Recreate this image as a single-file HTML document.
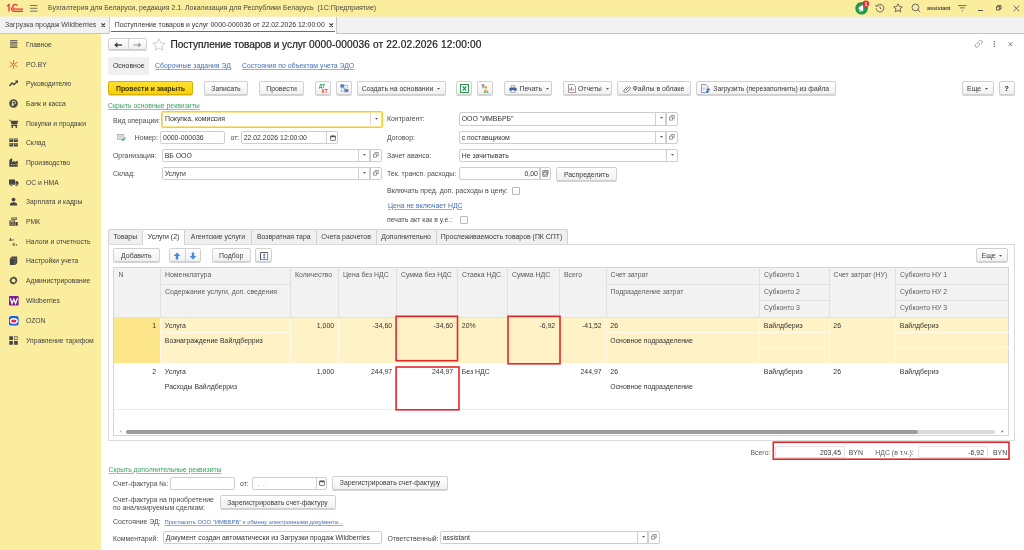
<!DOCTYPE html>
<html><head><meta charset="utf-8">
<style>
*{box-sizing:border-box;margin:0;padding:0}
html,body{width:1024px;height:550px;overflow:hidden;background:#fff}
body{will-change:transform;font-family:"Liberation Sans",sans-serif;font-size:6.9px;color:#3a3a3a;position:relative}
.a{position:absolute;white-space:nowrap}
.t{position:absolute;white-space:nowrap;line-height:10px;height:10px}
#titlebar{left:0;top:0;width:1024px;height:16px;background:#fbed9e}
#tabbar{left:0;top:16px;width:1024px;height:18px;background:#f2f2f2;border-bottom:1px solid #c4c4c4}
#sidebar{left:0;top:34px;width:101px;height:516px;background:#fbed9e}
#sideedge{left:101px;top:34px;width:0.5px;height:516px;background:#fbed9e}
.inp{position:absolute;height:13px;border:1px solid #cecece;border-radius:2px;background:#fff;line-height:11px;padding-left:1.7px;color:#333;white-space:nowrap;overflow:hidden}
.btn{position:absolute;height:14px;border:1px solid #d0d0d0;border-radius:2px;background:linear-gradient(#ffffff,#f0f0f0);line-height:13px;text-align:center;color:#3a3a3a;white-space:nowrap;box-shadow:0 1px 0.6px rgba(0,0,0,.17)}
.lnk{color:#4370b4;text-decoration:underline;text-decoration-thickness:0.6px;text-underline-offset:0.8px;text-decoration-color:rgba(67,112,180,.55)}
.glnk{color:#35a35f;text-decoration:underline;text-decoration-thickness:0.6px;text-underline-offset:0.8px;text-decoration-color:rgba(53,163,95,.6)}
.sep{position:absolute;top:0;bottom:0;width:1px;background:#d2d2d2}
.sb{position:absolute;left:26px;line-height:10px;color:#3f3f3f;font-size:6.75px}
.lb{position:absolute;white-space:nowrap;line-height:10px;color:#4a4a4a}
.dd{position:absolute;font-size:5px;color:#555;line-height:10px}
.c{position:absolute;white-space:nowrap;line-height:10px;color:#333}
.h{position:absolute;white-space:nowrap;line-height:10px;color:#5a5a5a}
</style></head><body>
<div class="a" id="titlebar"></div>
<div class="a" id="tabbar"></div>
<div class="a" style="left:0;top:16px;width:1024px;height:1px;background:#f6efc6"></div>
<div class="a" id="sidebar"></div>

<!-- TITLEBAR -->
<svg class="a" style="left:6px;top:3px" width="18" height="10" viewBox="0 0 18 10"><g fill="none" stroke="#e5333a" stroke-width="1.3"><path d="M1 3.2L3 1.6V8.6"/><path d="M17 6.2H9.2a2.4 2.4 0 0 1 0-4.8c1 0 1.8 0.5 2.2 1.2"/><path d="M17 8.4H9a4 4 0 0 1-3.6-4"/></g></svg>
<svg class="a" style="left:30px;top:5px" width="8" height="7" viewBox="0 0 8 7"><path d="M0 0.5h7.5M0 3.3h7.5M0 6.1h7.5" stroke="#555" stroke-width="0.8"/></svg>
<div class="t" style="left:48px;top:3px;color:#4a4a3a;font-size:7px">Бухгалтерия для Беларуси, редакция 2.1. Локализация для Республики Беларусь&nbsp; (1С:Предприятие)</div>
<svg class="a" style="left:854px;top:0px" width="18" height="16" viewBox="0 0 18 16"><circle cx="7.6" cy="8.2" r="6.3" fill="#1e9a4a"/><path d="M4.6 7.6l4.6-3v7l-4.6-2.4z M5.2 10.2l0.8 1.8h1.3l-0.6-1.6z" fill="#fff"/><circle cx="11.8" cy="3.8" r="3.3" fill="#e8262d"/><text x="10.6" y="5.7" font-size="5.2" font-weight="bold" font-family="Liberation Sans" fill="#fff">1</text></svg>
<svg class="a" style="left:875px;top:3px" width="10" height="10" viewBox="0 0 10 10"><g stroke="#555" stroke-width="0.85" fill="none"><path d="M1.6 3.2A3.9 3.9 0 1 1 1.1 5.4"/><path d="M5 2.8V5.2l1.6 1"/><path d="M0.4 1.8l1.1 1.7 1.8-0.8"/></g></svg>
<svg class="a" style="left:893px;top:3px" width="10" height="10" viewBox="0 0 10 10"><path d="M5 0.8l1.3 2.8 3 0.3-2.3 2 0.7 3L5 7.4 2.3 8.9l0.7-3-2.3-2 3-0.3z" stroke="#555" stroke-width="0.85" fill="none"/></svg>
<svg class="a" style="left:911px;top:3px" width="10" height="10" viewBox="0 0 10 10"><circle cx="4.4" cy="4.4" r="3.4" stroke="#555" stroke-width="0.85" fill="none"/><path d="M6.8 6.8l2.4 2.2" stroke="#555" stroke-width="0.9"/></svg>
<div class="t" style="left:927px;top:3px;font-size:5.6px;color:#444;font-weight:bold;letter-spacing:-0.1px">assistant</div>
<svg class="a" style="left:958px;top:4px" width="9" height="8" viewBox="0 0 9 8"><path d="M0 1.6h8.6M1.8 3.9h5" stroke="#555" stroke-width="0.85"/><path d="M3.3 6.4h2L4.3 7.6z" fill="#555"/></svg>
<div class="a" style="left:978px;top:10px;width:5px;height:1px;background:#555"></div>
<svg class="a" style="left:996px;top:5.4px" width="5.6" height="5.6" viewBox="0 0 7 7"><path d="M0.6 2.2h4v4h-4zM2 2V0.7h4.2v4.2H4.8" stroke="#444" stroke-width="1.1" fill="none"/></svg>
<svg class="a" style="left:1013px;top:5px" width="7" height="7" viewBox="0 0 7 7"><path d="M0.6 0.6l5.6 5.6M6.2 0.6L0.6 6.2" stroke="#555" stroke-width="0.85"/></svg>
<!-- TABS -->
<div class="t" style="left:5px;top:20px;color:#444;font-size:7px">Загрузка продаж Wildberries</div>
<svg class="a" style="left:100.5px;top:22.8px" width="4.4" height="4.4" viewBox="0 0 5 5"><path d="M0.5 0.5l4 4M4.5 0.5l-4 4" stroke="#333" stroke-width="1.3"/></svg>
<div class="a" style="left:109px;top:16.5px;width:228px;height:17.5px;background:#fff;border-left:1px solid #c9c9c9;border-right:1px solid #c9c9c9"></div>
<div class="a" style="left:111px;top:31px;width:224px;height:1px;background:#1c9a46"></div>
<div class="t" style="left:114.8px;top:20px;color:#333;font-size:6.88px">Поступление товаров и услуг 0000-000036 от 22.02.2026 12:00:00</div>
<svg class="a" style="left:328.5px;top:22.8px" width="4.4" height="4.4" viewBox="0 0 5 5"><path d="M0.5 0.5l4 4M4.5 0.5l-4 4" stroke="#333" stroke-width="1.3"/></svg>
<!-- SIDEBAR -->
<svg class="a" style="left:9px;top:39.5px" width="10" height="10" viewBox="0 0 10 10"><path d="M1 0.8h7.4M1 2.9h7.4M1 5h7.4M1 7.1h7.4" stroke="#454545" stroke-width="1.1" fill="none"/></svg>
<div class="sb" style="top:39.8px">Главное</div>
<svg class="a" style="left:9px;top:59.5px" width="10" height="10" viewBox="0 0 10 10"><g stroke="#e05a4a" stroke-width="0.8" fill="none"><path d="M4.5 0v9M0.5 2l8 5M0.5 7l8-5"/><circle cx="4.5" cy="4.5" r="1.2" fill="#fbed9e"/></g></svg>
<div class="sb" style="top:59.8px">PO.BY</div>
<svg class="a" style="left:9px;top:79.0px" width="10" height="10" viewBox="0 0 10 10"><path d="M0.5 7L3 4l2 1.5L8.5 2" stroke="#454545" stroke-width="1.4" fill="none"/><path d="M6 1.5h3v3z" fill="#454545"/></svg>
<div class="sb" style="top:79.3px">Руководителю</div>
<svg class="a" style="left:9px;top:98.5px" width="10" height="10" viewBox="0 0 10 10"><circle cx="4.5" cy="4.5" r="4.3" fill="#454545"/><path d="M3.3 7V2.2h1.8a1.4 1.4 0 0 1 0 2.8H3.3M2.5 6h2.6" stroke="#fbed9e" stroke-width="0.9" fill="none"/></svg>
<div class="sb" style="top:98.8px">Банк и касса</div>
<svg class="a" style="left:9px;top:118.5px" width="10" height="10" viewBox="0 0 10 10"><path d="M0 0.8h1.6l0.5 1h7.2l-1.2 3.6H2.6L1.4 1.6H0z M2.3 6h6v0.9h-6z" fill="#454545"/><circle cx="3.2" cy="8" r="0.9" fill="#454545"/><circle cx="7.3" cy="8" r="0.9" fill="#454545"/></svg>
<div class="sb" style="top:118.8px">Покупки и продажи</div>
<svg class="a" style="left:9px;top:138.0px" width="10" height="10" viewBox="0 0 10 10"><path d="M0.3 0.5h3.9v3.6H0.3zM4.9 0.5h3.9v3.6H4.9zM0.3 4.9h3.9v3.6H0.3zM4.9 4.9h3.9v3.6H4.9z" fill="#454545"/><path d="M1.2 1.6h2M5.8 1.6h2M1.2 6h2M5.8 6h2" stroke="#fbed9e" stroke-width="0.7"/></svg>
<div class="sb" style="top:138.3px">Склад</div>
<svg class="a" style="left:9px;top:157.5px" width="10" height="10" viewBox="0 0 10 10"><path d="M0.3 8.7V2.2L2 0.6h1.2v3.6L5.7 2.6v1.6L8.7 2.6v6.1z" fill="#454545"/><path d="M2 6.5h1.2M4.4 6.5h1.2M6.6 6.5h1.2" stroke="#fbed9e" stroke-width="0.8"/></svg>
<div class="sb" style="top:157.8px">Производство</div>
<svg class="a" style="left:9px;top:177.5px" width="10" height="10" viewBox="0 0 10 10"><path d="M0 1.5h6v5.2H0zM6.5 3h1.6l1.4 1.6v2.1H6.5z" fill="#454545"/><circle cx="2.2" cy="7.2" r="1.1" fill="#454545" stroke="#fbed9e" stroke-width="0.4"/><circle cx="7.4" cy="7.2" r="1.1" fill="#454545" stroke="#fbed9e" stroke-width="0.4"/></svg>
<div class="sb" style="top:177.8px">ОС и НМА</div>
<svg class="a" style="left:9px;top:197.0px" width="10" height="10" viewBox="0 0 10 10"><circle cx="4.5" cy="2.6" r="1.9" fill="#454545"/><path d="M0.9 8.6V7.4C0.9 6 2.5 5.2 4.5 5.2s3.6 0.8 3.6 2.2v1.2z" fill="#454545"/></svg>
<div class="sb" style="top:197.3px">Зарплата и кадры</div>
<svg class="a" style="left:9px;top:216.5px" width="10" height="10" viewBox="0 0 10 10"><path d="M0.4 3.4h5.6v5.3H0.4zM6.4 5h2.3v3.7H6.4zM2.4 0.4h5.4v2.4H2.4z" fill="#454545"/><path d="M1.4 4.6h3.6M3.2 1.4h3.6" stroke="#fbed9e" stroke-width="0.7"/><path d="M1.3 6h1M2.8 6h1M4.3 6h1M1.3 7.4h1M2.8 7.4h1M4.3 7.4h1" stroke="#fbed9e" stroke-width="0.6"/></svg>
<div class="sb" style="top:216.8px">РМК</div>
<svg class="a" style="left:9px;top:236.5px" width="10" height="10" viewBox="0 0 10 10"><text x="0" y="3.8" font-size="4.2" font-family="Liberation Sans" font-weight="bold" fill="#454545">Ат</text><text x="3.6" y="8.6" font-size="4.2" font-family="Liberation Sans" font-weight="bold" fill="#454545">Кт</text></svg>
<div class="sb" style="top:236.8px">Налоги и отчетность</div>
<svg class="a" style="left:9px;top:256.0px" width="10" height="10" viewBox="0 0 10 10"><path d="M0.8 2.6L3 0.6h5.2v6.3L6 8.9H0.8z" fill="#454545"/><path d="M6 2.6H0.8M6 2.6v6.3M6 2.6L8.2 0.6" stroke="#8a8a7a" stroke-width="0.5" fill="none"/></svg>
<div class="sb" style="top:256.3px">Настройки учета</div>
<svg class="a" style="left:9px;top:275.5px" width="10" height="10" viewBox="0 0 10 10"><path d="M4.5 0l0.7 1.2 1.3-0.5 0.2 1.4 1.4 0.2-0.5 1.3 1.2 0.7-1.2 0.7 0.5 1.3-1.4 0.2-0.2 1.4-1.3-0.5L4.5 9l-0.7-1.2-1.3 0.5-0.2-1.4-1.4-0.2 0.5-1.3L0.2 4.5l1.2-0.7-0.5-1.3 1.4-0.2 0.2-1.4 1.3 0.5z" fill="#454545"/><circle cx="4.5" cy="4.5" r="2" fill="#fbed9e"/></svg>
<div class="sb" style="top:275.8px">Администрирование</div>
<svg class="a" style="left:9px;top:295.5px" width="10" height="10" viewBox="0 0 10 10"><rect x="0" y="0" width="9.6" height="9.6" rx="0.8" fill="#7d1c98"/><path d="M1.2 2.2L3 7.4 4.8 3.2 6.6 7.4 8.4 2.2" stroke="#fff" stroke-width="1.3" fill="none" stroke-linejoin="miter"/></svg>
<div class="sb" style="top:295.8px">Wildberries</div>
<svg class="a" style="left:9px;top:315.5px" width="10" height="10" viewBox="0 0 10 10"><rect x="0" y="0" width="9.6" height="9.6" rx="2.2" fill="#1a5fe0"/><ellipse cx="4.8" cy="4.9" rx="4" ry="2.9" fill="#fff"/><ellipse cx="4.8" cy="5" rx="2.7" ry="1.6" fill="#e8214a"/></svg>
<div class="sb" style="top:315.8px">OZON</div>
<svg class="a" style="left:9px;top:335.5px" width="10" height="10" viewBox="0 0 10 10"><path d="M0.3 0.3h3.6v3.6H0.3zM0.3 5.1h3.6v3.6H0.3zM5.1 5.1h3.6v3.6H5.1z" fill="#454545"/><path d="M5.4 0.6h3v3h-3z" fill="none" stroke="#454545" stroke-width="0.7"/></svg>
<div class="sb" style="top:335.8px">Управление тарифом</div>
<!-- HEADER -->
<div class="btn" style="left:108px;top:38px;width:39px;height:12px;border-radius:2px"><div class="sep" style="left:19px"></div></div>
<svg class="a" style="left:114px;top:42px" width="9" height="6" viewBox="0 0 9 6"><path d="M2 3h6" stroke="#333" stroke-width="1.3" fill="none"/><path d="M3.4 0.2L0.2 3l3.2 2.8z" fill="#333"/></svg>
<svg class="a" style="left:133px;top:42px" width="9" height="6" viewBox="0 0 9 6"><path d="M0.6 3h6" stroke="#9a9a9a" stroke-width="1.1" fill="none"/><path d="M5.4 0.4L8.4 3 5.4 5.6z" fill="#9a9a9a"/></svg>
<svg class="a" style="left:152px;top:38px" width="14" height="13" viewBox="0 0 14 13"><path d="M7 0.8l1.8 4 4.2 0.4-3.2 2.8 1 4.2L7 10 3.2 12.2l1-4.2L1 5.2l4.2-0.4z" stroke="#c4c4c4" stroke-width="0.8" fill="none"/></svg>
<div class="a" style="left:170.6px;top:38px;font-size:10.15px;line-height:13px;color:#1e1e1e;-webkit-text-stroke:0.22px #1e1e1e"><span style="letter-spacing:-0.09px">Поступление товаров и услуг </span><span style="letter-spacing:0.12px">0000-000036 от 22.02.2026 12:00:00</span></div>
<svg class="a" style="left:974px;top:39px" width="10" height="10" viewBox="0 0 10 10"><g stroke="#8a8a8a" stroke-width="0.8" fill="none"><path d="M4 5.4a1.7 1.7 0 0 1 0.1-2.2l1.4-1.4a1.7 1.7 0 0 1 2.4 2.4L7 5.1"/><path d="M5.4 4.2a1.7 1.7 0 0 1-0.1 2.2L3.9 7.8a1.7 1.7 0 0 1-2.4-2.4L2.4 4.5"/></g></svg>
<svg class="a" style="left:993px;top:40px" width="3" height="8" viewBox="0 0 3 8"><circle cx="1.3" cy="1.7" r="0.75" fill="#666"/><circle cx="1.3" cy="4" r="0.75" fill="#666"/><circle cx="1.3" cy="6.3" r="0.75" fill="#666"/></svg>
<svg class="a" style="left:1008px;top:42px" width="5" height="5" viewBox="0 0 5 5"><path d="M0.5 0.3l3.8 3.8M4.3 0.3L0.5 4.1" stroke="#707070" stroke-width="0.9"/></svg>
<div class="a" style="left:108px;top:57px;width:41px;height:18px;background:#f0f0f0;border-radius:1px"></div>
<div class="t" style="left:113px;top:61px;color:#333">Основное</div>
<div class="t lnk" style="left:155px;top:61px">Сборочные задания ЭД</div>
<div class="t lnk" style="left:242px;top:61px">Состояния по объектам учета ЭДО</div>
<!-- TOOLBAR -->
<div class="btn" style="left:108px;top:81px;width:85px;background:linear-gradient(#ffe12e,#f9cf05);border-color:#d4b000;font-weight:bold;color:#3a3200">Провести и закрыть</div>
<div class="btn" style="left:204px;top:81px;width:44px;">Записать</div>
<div class="btn" style="left:259px;top:81px;width:45px;">Провести</div>
<div class="btn" style="left:315px;top:81px;width:16px;"><svg class="a" style="left:3px;top:2px" width="9" height="9" viewBox="0 0 9 9"><text x="0" y="4.2" font-size="4.6" font-weight="bold" font-family="Liberation Sans" fill="#2e9a55">ДТ</text><text x="2.8" y="8.6" font-size="4.6" font-weight="bold" font-family="Liberation Sans" fill="#e8353b">КТ</text></svg></div>
<div class="btn" style="left:335.5px;top:81px;width:16px;"><svg class="a" style="left:3px;top:2px" width="9" height="9" viewBox="0 0 9 9"><g fill="none" stroke="#5c86c4" stroke-width="0.8"><rect x="0.8" y="0.8" width="3.2" height="2.4" fill="#4a78bd"/><rect x="4.8" y="5.4" width="3.2" height="2.4" fill="#4a78bd"/><path d="M5.2 1.4h2.4v2.8M3.8 7.2H1.4V4.4" stroke="#86a8da"/><path d="M3 4.4h3" stroke="#86a8da"/></g></svg></div>
<div class="btn" style="left:356.5px;top:81px;width:89px;">Создать на основании&nbsp; <svg width="3" height="1.9" viewBox="0 0 3.6 2.2" style="position:relative;top:-1.3px"><path d="M0 0h3.6L1.8 2.2z" fill="#555"/></svg></div>
<div class="btn" style="left:456px;top:81px;width:16px;"><svg class="a" style="left:3px;top:2px" width="9" height="9" viewBox="0 0 9 9"><rect x="0.5" y="0.5" width="8" height="8" fill="#fff" stroke="#1f8a44" stroke-width="0.9"/><path d="M2.6 2.4l3.8 4.2M6.4 2.4L2.6 6.6" stroke="#1f8a44" stroke-width="1.1"/></svg></div>
<div class="btn" style="left:477px;top:81px;width:16px;"><svg class="a" style="left:3px;top:2px" width="9" height="10" viewBox="0 0 9 10"><path d="M0.6 1h3M2.1 1v3.4" stroke="#444" stroke-width="0.8" fill="none"/><circle cx="4.8" cy="3.2" r="1.3" fill="#e0a040"/><path d="M2.8 6.8c0-1.6 4-1.6 4 0z" fill="#e0a040"/><path d="M3.4 9V7.2M4.6 9V7.2M3.4 9l1.2-1.8M5.6 9l0.9-1.8 0.9 1.8M5.9 8.4h1.2" stroke="#2e9a55" stroke-width="0.6" fill="none"/></svg></div>
<div class="btn" style="left:504px;top:81px;width:48px;"><svg class="a" style="left:3.6px;top:2.6px" width="8" height="8.4" viewBox="0 0 9 9"><path d="M2.4 0.6h4.2v2.2H2.4z" fill="#fff" stroke="#6a7a9a" stroke-width="0.7"/><rect x="0.5" y="2.8" width="8" height="3.8" rx="0.9" fill="#3f5f9a"/><path d="M2.4 5.4h4.2v3H2.4z" fill="#fff" stroke="#6a7a9a" stroke-width="0.7"/></svg><span style="padding-left:12.5px">Печать &nbsp;<svg width="3" height="1.9" viewBox="0 0 3.6 2.2" style="position:relative;top:-1.3px"><path d="M0 0h3.6L1.8 2.2z" fill="#555"/></svg></span></div>
<div class="btn" style="left:563px;top:81px;width:48.5px;"><svg class="a" style="left:4px;top:2px" width="8" height="9" viewBox="0 0 8 9"><path d="M0.5 0.5h5l2 2v6h-7z" fill="#fff" stroke="#777" stroke-width="0.7"/><path d="M2 6.5V4.4M3.6 6.5V3M5.2 6.5V5" stroke="#d0443a" stroke-width="0.9"/></svg><span style="padding-left:12px">Отчеты &nbsp;<svg width="3" height="1.9" viewBox="0 0 3.6 2.2" style="position:relative;top:-1.3px"><path d="M0 0h3.6L1.8 2.2z" fill="#555"/></svg></span></div>
<div class="btn" style="left:616.9px;top:81px;width:74.6px;"><svg class="a" style="left:5px;top:3px" width="8" height="8" viewBox="0 0 8 8"><path d="M2.6 5.4l3-3a1.1 1.1 0 0 1 1.6 1.6L3.6 7.2a1.7 1.7 0 0 1-2.4-2.4L4.4 1.6" stroke="#666" stroke-width="0.8" fill="none"/></svg><span style="padding-left:8.5px">Файлы в облаке</span></div>
<div class="btn" style="left:696px;top:81px;width:139.5px;"><svg class="a" style="left:4px;top:2px" width="10" height="9" viewBox="0 0 10 9"><path d="M0.5 0.5h4.4l1.8 1.8v6.2H0.5z" fill="#fff" stroke="#5577aa" stroke-width="0.7"/><path d="M1.6 3h3M1.6 4.6h3M1.6 6.2h2" stroke="#7a9acc" stroke-width="0.6"/><path d="M5 5.6h3.6M7.2 4.2l1.6 1.4-1.6 1.4" stroke="#3b66ad" stroke-width="0.9" fill="none"/><circle cx="6.4" cy="7.6" r="1.2" fill="#3b66ad"/></svg><span style="padding-left:11px;font-size:6.78px">Загрузить (перезаполнить) из файла</span></div>
<div class="btn" style="left:961.5px;top:81px;width:32px;">Еще &nbsp;<svg width="3" height="1.9" viewBox="0 0 3.6 2.2" style="position:relative;top:-1.3px"><path d="M0 0h3.6L1.8 2.2z" fill="#555"/></svg></div>
<div class="btn" style="left:998.5px;top:81px;width:16px;"><b style="font-size:7.5px;color:#222">?</b></div>
<!-- FORM -->
<div class="t glnk" style="left:108px;top:101px">Скрыть основные реквизиты</div>
<div class="lb" style="left:113px;top:115.6px">Вид операции:</div>
<div class="inp" style="left:161px;top:111px;width:222px;height:16.6px;line-height:14.8px;border:1px solid #f5cc20;box-shadow:inset 0 0 0 0.6px #f5cc20;border-radius:1.5px;padding-left:3px">Покупка, комиссия</div>
<div class="a" style="left:370px;top:113px;width:1px;height:12px;background:#d8d8d8"></div>
<svg class="a" style="left:375px;top:118px" width="3" height="1.9" viewBox="0 0 3.6 2.2"><path d="M0 0h3.6L1.8 2.2z" fill="#555"/></svg>
<svg class="a" style="left:117px;top:134.3px" width="9.2" height="7.5" viewBox="0 0 11 9"><rect x="0.6" y="0.6" width="7.6" height="6" fill="#e8e8e8" stroke="#9a9a9a" stroke-width="0.7"/><path d="M1.8 2.4h5M1.8 4h5" stroke="#aaa" stroke-width="0.6"/><path d="M5.6 6l1.6 1.8 3-3.6" stroke="#2e9a55" stroke-width="1.3" fill="none"/></svg>
<div class="lb" style="left:134.7px;top:132.5px">Номер:</div>
<div class="inp" style="left:160.4px;top:131px;width:64.6px;height:13px;line-height:11px;">0000-000036</div>
<div class="lb" style="left:230.5px;top:132.5px">от:</div>
<div class="inp" style="left:241px;top:131px;width:97px;height:13px;line-height:11px;">22.02.2026 12:00:00</div>
<div class="a" style="left:326px;top:132px;width:1px;height:11px;background:#d0d0d0"></div>
<svg class="a" style="left:329.5px;top:134.5px" width="6" height="6" viewBox="0 0 6 6"><rect x="0.5" y="0.8" width="5" height="4.6" rx="0.6" fill="none" stroke="#555" stroke-width="0.8"/><path d="M0.5 1.6h5" stroke="#555" stroke-width="1.3"/></svg>
<div class="lb" style="left:113px;top:150.5px">Организация:</div>
<div class="inp" style="left:162px;top:149px;width:208px;height:13px;line-height:11px;border-radius:2px 0 0 2px;">ВБ ООО</div>
<div class="a" style="left:358px;top:150px;width:1px;height:11px;background:#d0d0d0"></div>
<svg class="a" style="left:362.6px;top:154px" width="3" height="1.9" viewBox="0 0 3.6 2.2"><path d="M0 0h3.6L1.8 2.2z" fill="#555"/></svg>
<div class="a" style="left:369px;top:149px;width:13px;height:13px;border:1px solid #cecece;border-radius:0 2px 2px 0;background:#fff"></div>
<div class="a" style="left:370px;top:149px;width:1px;height:13px;background:#cecece"></div>
<svg class="a" style="left:373px;top:152.3px" width="5.8" height="5.6" viewBox="0 0 6 6"><path d="M2.2 1.6V0.5h3.3v3.3H4.4M0.5 2.2h3.3v3.3H0.5z" stroke="#707070" stroke-width="0.8" fill="none"/></svg>
<div class="lb" style="left:113px;top:168.5px">Склад:</div>
<div class="inp" style="left:162px;top:167px;width:208px;height:13px;line-height:11px;border-radius:2px 0 0 2px;">Услуги</div>
<div class="a" style="left:358px;top:168px;width:1px;height:11px;background:#d0d0d0"></div>
<svg class="a" style="left:362.6px;top:172px" width="3" height="1.9" viewBox="0 0 3.6 2.2"><path d="M0 0h3.6L1.8 2.2z" fill="#555"/></svg>
<div class="a" style="left:369px;top:167px;width:13px;height:13px;border:1px solid #cecece;border-radius:0 2px 2px 0;background:#fff"></div>
<div class="a" style="left:370px;top:167px;width:1px;height:13px;background:#cecece"></div>
<svg class="a" style="left:373px;top:170.3px" width="5.8" height="5.6" viewBox="0 0 6 6"><path d="M2.2 1.6V0.5h3.3v3.3H4.4M0.5 2.2h3.3v3.3H0.5z" stroke="#707070" stroke-width="0.8" fill="none"/></svg>
<div class="lb" style="left:387px;top:114px">Контрагент:</div>
<div class="inp" style="left:459px;top:112px;width:207px;height:14px;line-height:12px;border-radius:2px 0 0 2px;">ООО "ИМВБРБ"</div>
<div class="a" style="left:655px;top:113px;width:1px;height:12px;background:#d0d0d0"></div>
<svg class="a" style="left:659.6px;top:117px" width="3" height="1.9" viewBox="0 0 3.6 2.2"><path d="M0 0h3.6L1.8 2.2z" fill="#555"/></svg>
<div class="a" style="left:665px;top:112px;width:13px;height:14px;border:1px solid #cecece;border-radius:0 2px 2px 0;background:#fff"></div>
<div class="a" style="left:666px;top:112px;width:1px;height:14px;background:#cecece"></div>
<svg class="a" style="left:669px;top:115.3px" width="5.8" height="5.6" viewBox="0 0 6 6"><path d="M2.2 1.6V0.5h3.3v3.3H4.4M0.5 2.2h3.3v3.3H0.5z" stroke="#707070" stroke-width="0.8" fill="none"/></svg>
<div class="lb" style="left:387px;top:132.5px">Договор:</div>
<div class="inp" style="left:459px;top:131px;width:207px;height:13px;line-height:11px;border-radius:2px 0 0 2px;">с поставщиком</div>
<div class="a" style="left:655px;top:132px;width:1px;height:11px;background:#d0d0d0"></div>
<svg class="a" style="left:659.6px;top:136px" width="3" height="1.9" viewBox="0 0 3.6 2.2"><path d="M0 0h3.6L1.8 2.2z" fill="#555"/></svg>
<div class="a" style="left:665px;top:131px;width:13px;height:13px;border:1px solid #cecece;border-radius:0 2px 2px 0;background:#fff"></div>
<div class="a" style="left:666px;top:131px;width:1px;height:13px;background:#cecece"></div>
<svg class="a" style="left:669px;top:134.3px" width="5.8" height="5.6" viewBox="0 0 6 6"><path d="M2.2 1.6V0.5h3.3v3.3H4.4M0.5 2.2h3.3v3.3H0.5z" stroke="#707070" stroke-width="0.8" fill="none"/></svg>
<div class="lb" style="left:387px;top:150.5px">Зачет аванса:</div>
<div class="inp" style="left:459px;top:149px;width:219px;height:13px;line-height:11px;">Не зачитывать</div>
<div class="a" style="left:666px;top:150px;width:1px;height:11px;background:#d0d0d0"></div>
<svg class="a" style="left:670.6px;top:154px" width="3" height="1.9" viewBox="0 0 3.6 2.2"><path d="M0 0h3.6L1.8 2.2z" fill="#555"/></svg>
<div class="lb" style="left:387px;top:168.5px">Тек. трансп. расходы:</div>
<div class="inp" style="left:459px;top:167px;width:81px;height:13px;line-height:11px;text-align:right;padding-right:1.2px;line-height:11.8px;border-radius:2px 0 0 2px;">0,00</div>
<div class="a" style="left:539px;top:167px;width:11.5px;height:13px;border:1px solid #cecece;border-radius:0 2px 2px 0;background:#fff"></div>
<div class="a" style="left:540px;top:167px;width:1px;height:13px;background:#cecece"></div>
<svg class="a" style="left:543px;top:170.3px" width="5.8" height="5.6" viewBox="0 0 6 6"><path d="M2.2 1.6V0.5h3.3v3.3H4.4M0.5 2.2h3.3v3.3H0.5z" stroke="#707070" stroke-width="0.8" fill="none"/></svg>
<svg class="a" style="left:542px;top:170px" width="6" height="7" viewBox="0 0 6 7"><rect x="0.5" y="0.5" width="5" height="6" rx="0.5" fill="none" stroke="#808080" stroke-width="0.7"/><path d="M1.3 2h3.4" stroke="#808080" stroke-width="0.9"/><path d="M1.4 3.8h3.2M1.4 5.2h3.2" stroke="#999" stroke-width="0.6" stroke-dasharray="0.8 0.4"/></svg>
<div class="btn" style="left:556px;top:167px;width:61px;height:14px;line-height:13px;">Распределить</div>
<div class="lb" style="left:387px;top:186px;font-size:7.02px">Включать пред. доп. расходы в цену:</div>
<div class="a" style="left:512px;top:187px;width:8px;height:8px;border:1px solid #b8b8b8;border-radius:1px;background:#fff"></div>
<div class="t lnk" style="left:388px;top:200.5px">Цена не включает НДС</div>
<div class="lb" style="left:387px;top:215px">печать акт как в у.е.:</div>
<div class="a" style="left:460px;top:216px;width:8px;height:8px;border:1px solid #b8b8b8;border-radius:1px;background:#fff"></div>
<!-- TABLE PANEL -->
<div class="a" style="left:108px;top:244px;width:906.5px;height:197px;border:1px solid #dcdcdc;background:#fff"></div>
<div class="a" style="left:107.5px;top:229px;width:35.5px;height:15px;background:#f0f0f0;border:1px solid #d2d2d2;border-bottom:none;border-radius:2px 2px 0 0;text-align:center;line-height:14px;color:#3a3a3a">Товары</div>
<div class="a" style="left:142px;top:229px;width:43px;height:16px;background:#fff;border:1px solid #d2d2d2;border-bottom:none;border-radius:2px 2px 0 0;text-align:center;line-height:14px;color:#2b2b2b">Услуги (2)</div>
<div class="a" style="left:184px;top:229px;width:68px;height:15px;background:#f0f0f0;border:1px solid #d2d2d2;border-bottom:none;border-radius:2px 2px 0 0;text-align:center;line-height:14px;color:#3a3a3a">Агентские услуги</div>
<div class="a" style="left:251px;top:229px;width:65.5px;height:15px;background:#f0f0f0;border:1px solid #d2d2d2;border-bottom:none;border-radius:2px 2px 0 0;text-align:center;line-height:14px;color:#3a3a3a">Возвратная тара</div>
<div class="a" style="left:315.5px;top:229px;width:61.0px;height:15px;background:#f0f0f0;border:1px solid #d2d2d2;border-bottom:none;border-radius:2px 2px 0 0;text-align:center;line-height:14px;color:#3a3a3a">Счета расчетов</div>
<div class="a" style="left:375.5px;top:229px;width:61.0px;height:15px;background:#f0f0f0;border:1px solid #d2d2d2;border-bottom:none;border-radius:2px 2px 0 0;text-align:center;line-height:14px;color:#3a3a3a">Дополнительно</div>
<div class="a" style="left:435.5px;top:229px;width:132.0px;height:15px;background:#f0f0f0;border:1px solid #d2d2d2;border-bottom:none;border-radius:2px 2px 0 0;text-align:center;line-height:14px;color:#3a3a3a">Прослеживаемость товаров (ПК СПТ)</div>
<div class="btn" style="left:113px;top:248px;width:46.6px;height:14px;line-height:13px;">Добавить</div>
<div class="btn" style="left:169px;top:248px;width:32px;height:14px"><div class="sep" style="left:15px"></div></div>
<svg class="a" style="left:173px;top:251.6px" width="8" height="8" viewBox="0 0 8 8"><path d="M4 0.4L7.4 4H5.2v3.4H2.8V4H0.6z" fill="#4a88dc"/></svg>
<svg class="a" style="left:189px;top:251.6px" width="8" height="8" viewBox="0 0 8 8"><path d="M4 7.6L7.4 4H5.2V0.6H2.8V4H0.6z" fill="#4a88dc"/></svg>
<div class="btn" style="left:211.5px;top:248px;width:39.3px;height:14px;line-height:13px;">Подбор</div>
<div class="btn" style="left:255px;top:248px;width:17px;height:14px;line-height:13px;"><svg class="a" style="left:3.6px;top:2.6px" width="8.4" height="8.4" viewBox="0 0 8 8"><rect x="0.5" y="0.5" width="7" height="7" rx="0.5" fill="#fff" stroke="#4a4a4a" stroke-width="0.9"/><path d="M4 1.4L5.3 3H2.7zM4 6.6L5.3 5H2.7z" fill="#3f6fb5"/><path d="M4 2.6v2.8" stroke="#3f6fb5" stroke-width="0.7"/></svg></div>
<div class="btn" style="left:975.8px;top:248px;width:32.4px;height:14px;line-height:13px;">Еще &nbsp;<svg width="3" height="1.9" viewBox="0 0 3.6 2.2" style="position:relative;top:-1.3px"><path d="M0 0h3.6L1.8 2.2z" fill="#555"/></svg></div>
<div class="a" style="left:113.1px;top:267.0px;width:895.9px;height:169.0px;border:1px solid #d6d6d6;background:#fff"></div>
<div class="a" style="left:113.6px;top:267.5px;width:894.9px;height:50.0px;background:#f2f2f2"></div>
<div class="a" style="left:160.0px;top:267.5px;width:1px;height:50.0px;background:#e0e0e0"></div>
<div class="a" style="left:290.0px;top:267.5px;width:1px;height:50.0px;background:#e0e0e0"></div>
<div class="a" style="left:338.0px;top:267.5px;width:1px;height:50.0px;background:#e0e0e0"></div>
<div class="a" style="left:396.0px;top:267.5px;width:1px;height:50.0px;background:#e0e0e0"></div>
<div class="a" style="left:457.0px;top:267.5px;width:1px;height:50.0px;background:#e0e0e0"></div>
<div class="a" style="left:507.0px;top:267.5px;width:1px;height:50.0px;background:#e0e0e0"></div>
<div class="a" style="left:559.0px;top:267.5px;width:1px;height:50.0px;background:#e0e0e0"></div>
<div class="a" style="left:605.5px;top:267.5px;width:1px;height:50.0px;background:#e0e0e0"></div>
<div class="a" style="left:759.0px;top:267.5px;width:1px;height:50.0px;background:#e0e0e0"></div>
<div class="a" style="left:828.5px;top:267.5px;width:1px;height:50.0px;background:#e0e0e0"></div>
<div class="a" style="left:895.0px;top:267.5px;width:1px;height:50.0px;background:#e0e0e0"></div>
<div class="a" style="left:113.6px;top:317.0px;width:894.9px;height:1px;background:#e2e2e2"></div>
<div class="a" style="left:160.5px;top:284.0px;width:130.0px;height:1px;background:#e2e2e2"></div>
<div class="a" style="left:606px;top:284.0px;width:223px;height:1px;background:#e2e2e2"></div>
<div class="a" style="left:895.5px;top:284.0px;width:113.0px;height:1px;background:#e2e2e2"></div>
<div class="a" style="left:759.5px;top:300.0px;width:69.5px;height:1px;background:#e2e2e2"></div>
<div class="a" style="left:895.5px;top:300.0px;width:113.0px;height:1px;background:#e2e2e2"></div>
<div class="h" style="left:118.5px;top:270.4px">N</div>
<div class="h" style="left:165.0px;top:270.4px">Номенклатура</div>
<div class="h" style="left:165.0px;top:287.4px">Содержание услуги, доп. сведения</div>
<div class="h" style="left:295.0px;top:270.4px">Количество</div>
<div class="h" style="left:343.0px;top:270.4px">Цена без НДС</div>
<div class="h" style="left:401.0px;top:270.4px">Сумма без НДС</div>
<div class="h" style="left:462.0px;top:270.4px">Ставка НДС</div>
<div class="h" style="left:512.0px;top:270.4px">Сумма НДС</div>
<div class="h" style="left:564.0px;top:270.4px">Всего</div>
<div class="h" style="left:610.5px;top:270.4px">Счет затрат</div>
<div class="h" style="left:610.5px;top:287.4px">Подразделение затрат</div>
<div class="h" style="left:764.0px;top:270.4px">Субконто 1</div>
<div class="h" style="left:764.0px;top:287.4px">Субконто 2</div>
<div class="h" style="left:764.0px;top:303.4px">Субконто 3</div>
<div class="h" style="left:833.5px;top:270.4px">Счет затрат (НУ)</div>
<div class="h" style="left:900.0px;top:270.4px">Субконто НУ 1</div>
<div class="h" style="left:900.0px;top:287.4px">Субконто НУ 2</div>
<div class="h" style="left:900.0px;top:303.4px">Субконто НУ 3</div>
<div class="a" style="left:113.6px;top:317.5px;width:894.9px;height:45.0px;background:#fff2c6"></div>
<div class="a" style="left:113.6px;top:317.5px;width:46.400000000000006px;height:45.0px;background:#fde58a"></div>
<div class="a" style="left:160.0px;top:317.5px;width:1px;height:45.0px;background:#fffbe8"></div>
<div class="a" style="left:290.0px;top:317.5px;width:1px;height:45.0px;background:#fffbe8"></div>
<div class="a" style="left:338.0px;top:317.5px;width:1px;height:45.0px;background:#fffbe8"></div>
<div class="a" style="left:396.0px;top:317.5px;width:1px;height:45.0px;background:#fffbe8"></div>
<div class="a" style="left:457.0px;top:317.5px;width:1px;height:45.0px;background:#fffbe8"></div>
<div class="a" style="left:507.0px;top:317.5px;width:1px;height:45.0px;background:#fffbe8"></div>
<div class="a" style="left:559.0px;top:317.5px;width:1px;height:45.0px;background:#fffbe8"></div>
<div class="a" style="left:605.5px;top:317.5px;width:1px;height:45.0px;background:#fffbe8"></div>
<div class="a" style="left:759.0px;top:317.5px;width:1px;height:45.0px;background:#fffbe8"></div>
<div class="a" style="left:828.5px;top:317.5px;width:1px;height:45.0px;background:#fffbe8"></div>
<div class="a" style="left:895.0px;top:317.5px;width:1px;height:45.0px;background:#fffbe8"></div>
<div class="a" style="left:160.5px;top:332.0px;width:130.0px;height:1px;background:#fffbe8"></div>
<div class="a" style="left:606px;top:332.0px;width:223px;height:1px;background:#fffbe8"></div>
<div class="a" style="left:895.5px;top:332.0px;width:113.0px;height:1px;background:#fffbe8"></div>
<div class="a" style="left:759.5px;top:347.0px;width:69.5px;height:1px;background:#fffbe8"></div>
<div class="a" style="left:895.5px;top:347.0px;width:113.0px;height:1px;background:#fffbe8"></div>
<div class="a" style="left:113.6px;top:409.0px;width:894.9px;height:1px;background:#ececec"></div>
<div class="c" style="right:867.9px;top:320.5px">1</div>
<div class="c" style="left:164.8px;top:320.5px">Услуга</div>
<div class="c" style="left:164.8px;top:335.8px">Вознаграждение Вайлдберриз</div>
<div class="c" style="right:689.9px;top:320.5px">1,000</div>
<div class="c" style="right:631.9px;top:320.5px">-34,60</div>
<div class="c" style="right:570.9px;top:320.5px">-34,60</div>
<div class="c" style="left:461.8px;top:320.5px">20%</div>
<div class="c" style="right:468.9px;top:320.5px">-6,92</div>
<div class="c" style="right:422.4px;top:320.5px">-41,52</div>
<div class="c" style="left:610.3px;top:320.5px">26</div>
<div class="c" style="left:610.3px;top:335.8px">Основное подразделение</div>
<div class="c" style="left:763.8px;top:320.5px">Вайлдбериз</div>
<div class="c" style="left:833.3px;top:320.5px">26</div>
<div class="c" style="left:899.8px;top:320.5px">Вайлдбериз</div>
<div class="c" style="right:867.9px;top:366.5px">2</div>
<div class="c" style="left:164.8px;top:366.5px">Услуга</div>
<div class="c" style="left:164.8px;top:381.8px">Расходы Вайлдберриз</div>
<div class="c" style="right:689.9px;top:366.5px">1,000</div>
<div class="c" style="right:631.9px;top:366.5px">244,97</div>
<div class="c" style="right:570.9px;top:366.5px">244,97</div>
<div class="c" style="left:461.8px;top:366.5px">Без НДС</div>
<div class="c" style="right:422.4px;top:366.5px">244,97</div>
<div class="c" style="left:610.3px;top:366.5px">26</div>
<div class="c" style="left:610.3px;top:381.8px">Основное подразделение</div>
<div class="c" style="left:763.8px;top:366.5px">Вайлдбериз</div>
<div class="c" style="left:833.3px;top:366.5px">26</div>
<div class="c" style="left:899.8px;top:366.5px">Вайлдбериз</div>
<div class="a" style="left:126px;top:429.5px;width:869px;height:4px;border-radius:2px;background:#dadada"></div>
<div class="a" style="left:126px;top:429.5px;width:791.5px;height:4px;border-radius:2px;background:#9b9b9b"></div>
<svg class="a" style="left:119px;top:430px" width="3" height="3" viewBox="0 0 3 3"><path d="M2.4 0.2L0.6 1.5l1.8 1.3z" fill="#b0b0b0"/></svg>
<svg class="a" style="left:1001px;top:430px" width="3" height="3" viewBox="0 0 3 3"><path d="M0.6 0.2L2.4 1.5 0.6 2.8z" fill="#555"/></svg>
<svg class="a" style="left:0;top:0;pointer-events:none" width="1024" height="550" viewBox="0 0 1024 550"><g fill="none" stroke="#e4252c" stroke-width="1.6"><rect x="396.1" y="316.3" width="61.4" height="44.4"/><rect x="508.0" y="316.3" width="51.999999999999964" height="47.50000000000002"/><rect x="396.1" y="367.0" width="62.9" height="42.80000000000003"/><rect x="773.3" y="442.2" width="235.69999999999996" height="17.00000000000002"/></g></svg>
<div class="lb" style="left:750.5px;top:447.5px;color:#5a5a5a">Всего:</div>
<div class="inp" style="left:774.5px;top:446px;width:70px;height:12px;line-height:11.6px;border-color:#e3e3e3;text-align:right;padding-right:2.5px">203,45</div>
<div class="lb" style="left:848.7px;top:447.5px;color:#444">BYN</div>
<div class="lb" style="left:875.3px;top:447.5px;color:#5a5a5a">НДС (в т.ч.):</div>
<div class="inp" style="left:918px;top:446px;width:69.5px;height:12px;line-height:11.6px;border-color:#e3e3e3;text-align:right;padding-right:2.5px">-6,92</div>
<div class="lb" style="left:993px;top:447.5px;color:#444">BYN</div>
<!-- BOTTOM -->
<div class="t glnk" style="left:108.5px;top:464.5px;font-size:6.8px">Скрыть дополнительные реквизиты</div>
<div class="lb" style="left:113px;top:478.9px">Счет-фактура №:</div>
<div class="inp" style="left:170px;top:476.5px;width:64.5px;height:13px;line-height:11px;"></div>
<div class="lb" style="left:240px;top:478.9px">от:</div>
<div class="inp" style="left:251.5px;top:476.5px;width:75px;height:13px;line-height:11px;"><span style="color:#999;padding-left:3px;letter-spacing:1px">. .</span></div>
<div class="a" style="left:316px;top:477.5px;width:1px;height:11px;background:#d0d0d0"></div>
<svg class="a" style="left:318.8px;top:480px" width="6" height="6" viewBox="0 0 6 6"><rect x="0.5" y="0.8" width="5" height="4.6" rx="0.6" fill="none" stroke="#555" stroke-width="0.8"/><path d="M0.5 1.6h5" stroke="#555" stroke-width="1.3"/></svg>
<div class="btn" style="left:332.3px;top:476px;width:115.5px;height:13.6px;line-height:12.6px;"><span style="font-size:6.78px">Зарегистрировать счет-фактуру</span></div>
<div class="lb" style="left:113px;top:495px">Счет-фактура на приобретение</div>
<div class="lb" style="left:113px;top:503.2px">по анализируемым сделкам:</div>
<div class="btn" style="left:219.5px;top:495px;width:116px;height:14px;line-height:13px;"><span style="font-size:6.78px">Зарегистрировать счет-фактуру</span></div>
<div class="lb" style="left:113px;top:516.8px">Состояние ЭД:</div>
<div class="t lnk" style="left:164.5px;top:517px;font-size:5.85px">Пригласить ООО "ИМВБРБ" к обмену электронными документа...</div>
<div class="lb" style="left:113px;top:533.5px">Комментарий:</div>
<div class="inp" style="left:163px;top:531px;width:218.5px;height:13px;line-height:11px;">Документ создан автоматически из Загрузки продаж Wildberries</div>
<div class="lb" style="left:387.5px;top:533.5px">Ответственный:</div>
<div class="inp" style="left:440px;top:531px;width:208px;height:13px;line-height:11px;border-radius:2px 0 0 2px;">assistant</div>
<div class="a" style="left:637px;top:532px;width:1px;height:11px;background:#d0d0d0"></div>
<svg class="a" style="left:641.6px;top:536px" width="3" height="1.9" viewBox="0 0 3.6 2.2"><path d="M0 0h3.6L1.8 2.2z" fill="#555"/></svg>
<div class="a" style="left:647px;top:531px;width:12.5px;height:13px;border:1px solid #cecece;border-radius:0 2px 2px 0;background:#fff"></div>
<div class="a" style="left:648px;top:531px;width:1px;height:13px;background:#cecece"></div>
<svg class="a" style="left:651px;top:534.3px" width="5.8" height="5.6" viewBox="0 0 6 6"><path d="M2.2 1.6V0.5h3.3v3.3H4.4M0.5 2.2h3.3v3.3H0.5z" stroke="#707070" stroke-width="0.8" fill="none"/></svg>
</body></html>
